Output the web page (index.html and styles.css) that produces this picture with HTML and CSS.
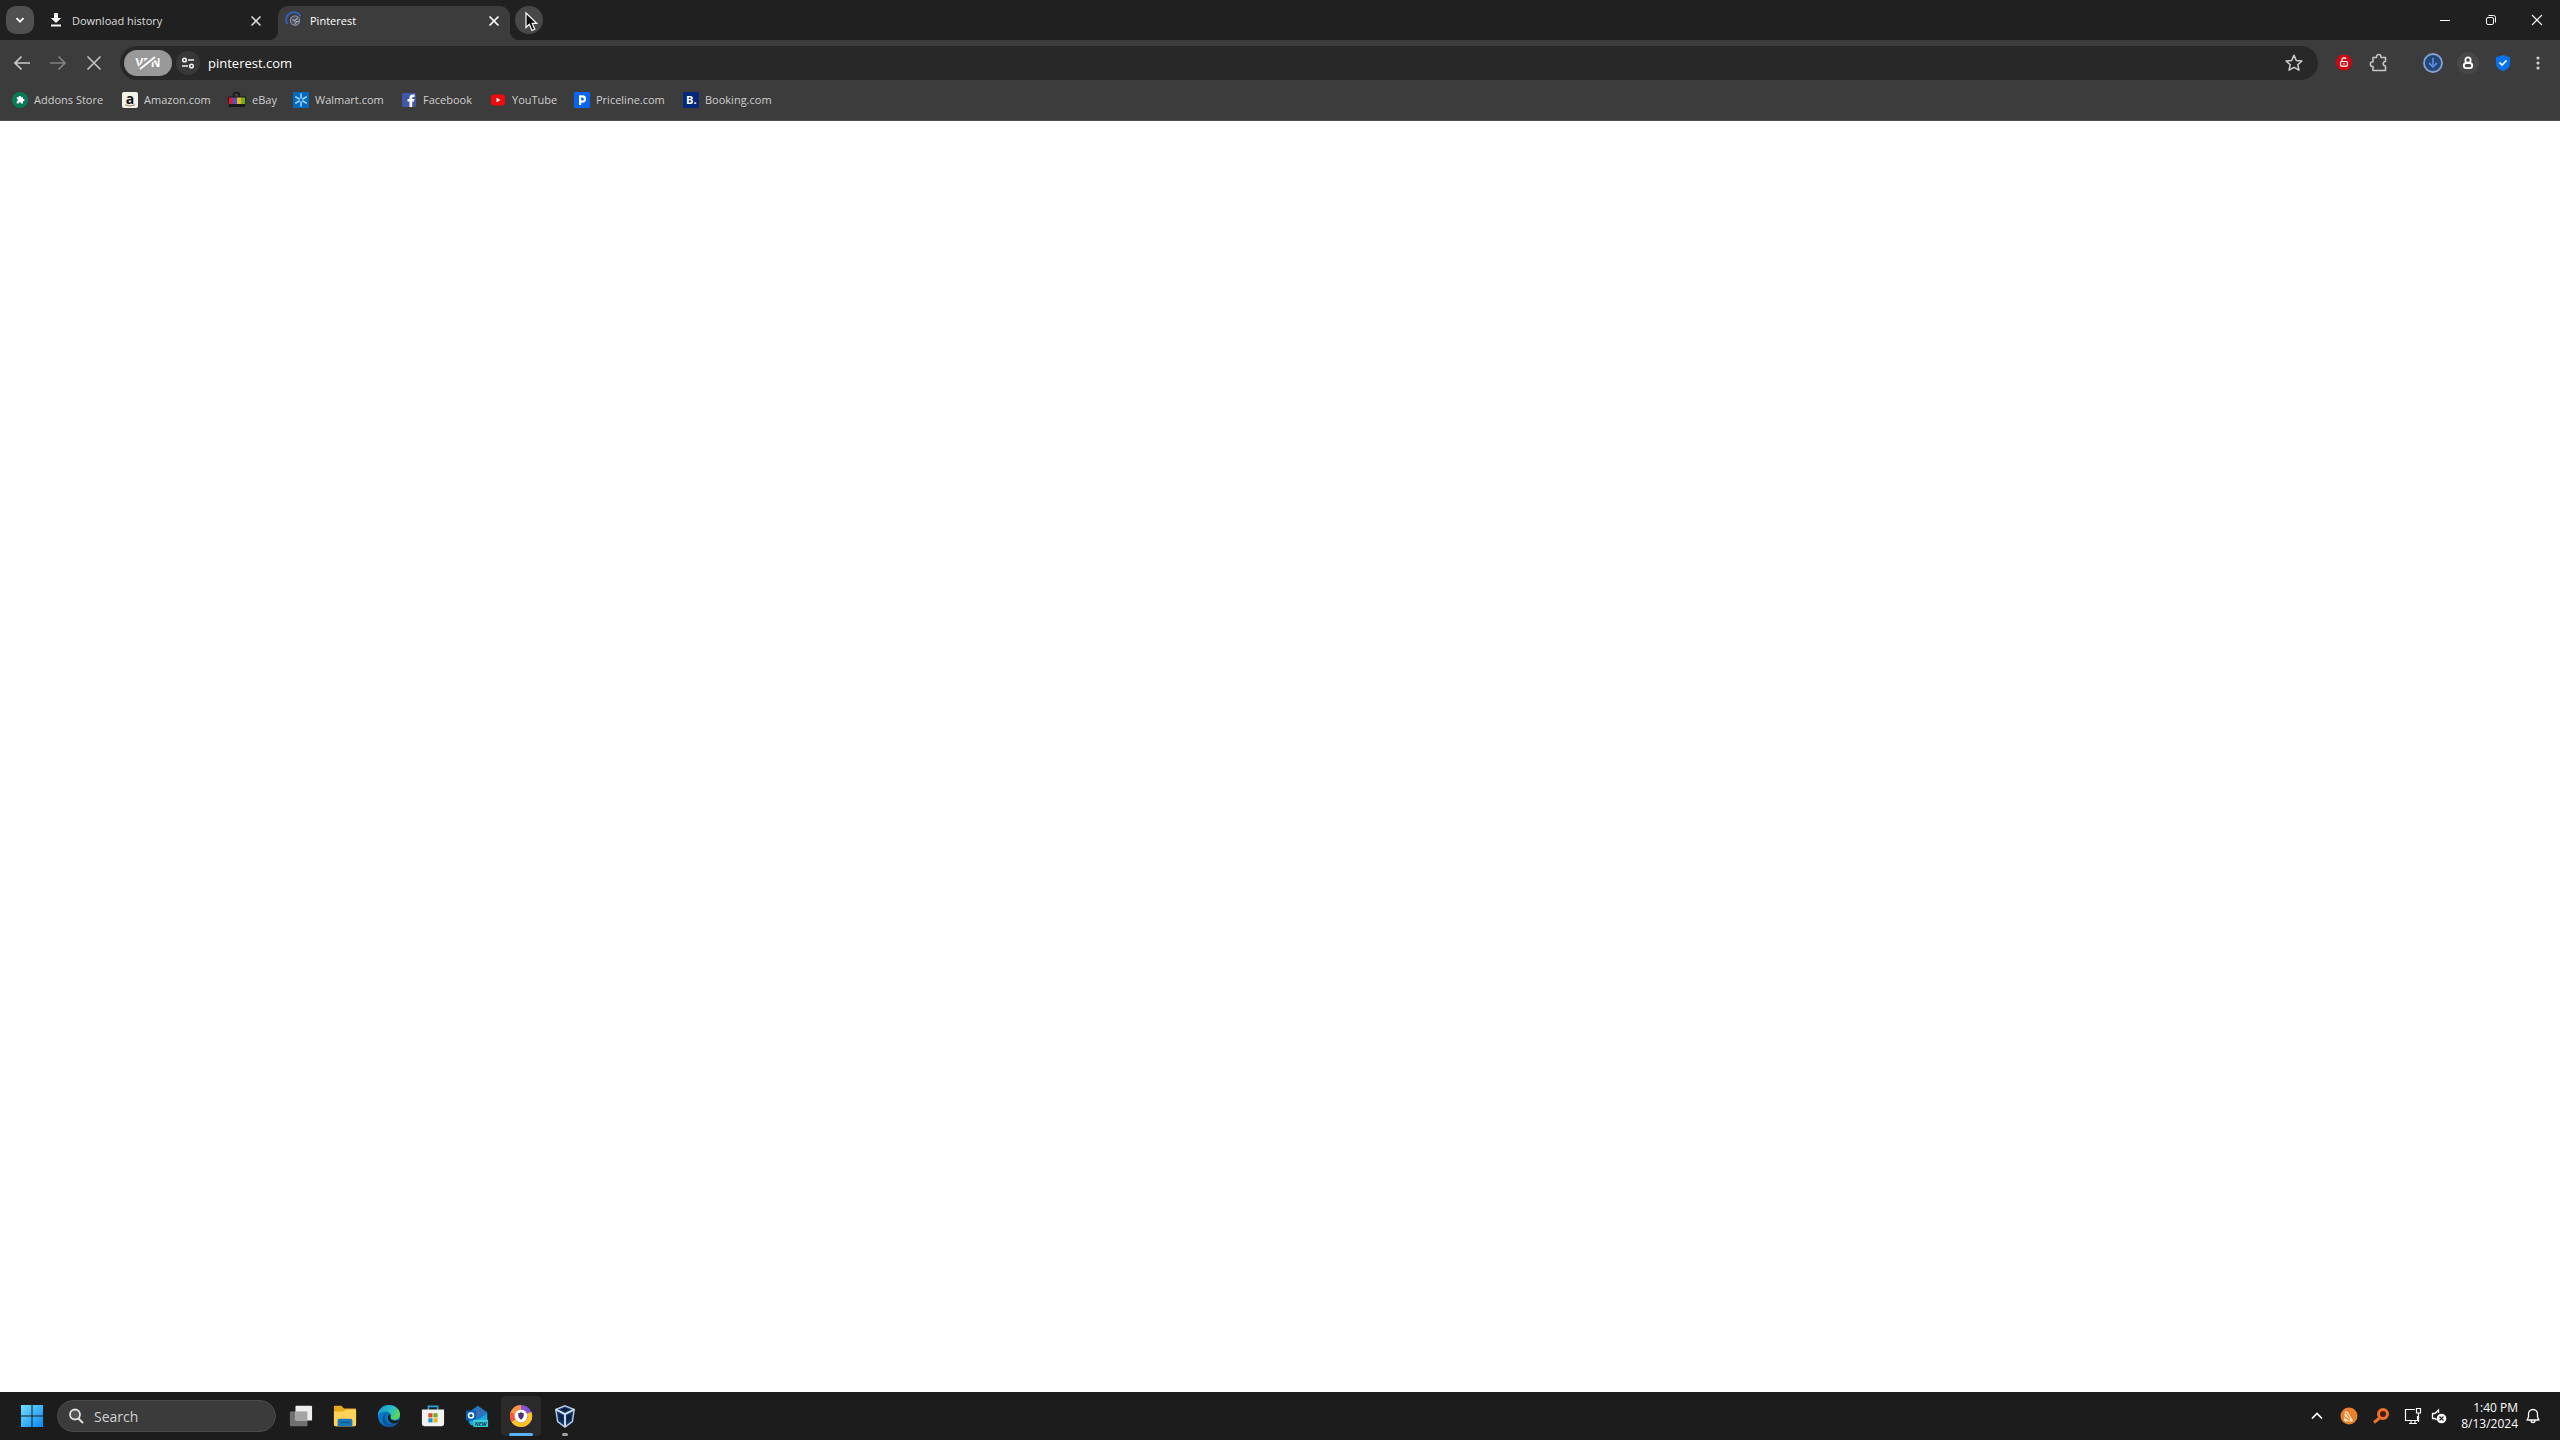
FILE: index.html
```html
<!DOCTYPE html>
<html lang="en">
<head>
<meta charset="utf-8">
<title>Pinterest</title>
<link rel="stylesheet" href="styles.css">
</head>
<body>
<div class="desktop">
  <header class="browser">
    <div class="tabstrip">
      <button class="tab-search" aria-label="Search tabs"><svg width="12" height="12" viewBox="0 0 12 12"><path d="M2.500 4.200L6 7.700l3.500-3.500" fill="none" stroke="#fff" stroke-width="1.800"/></svg></button>
      <div class="tabs">
        <div class="tab">
          <svg class="favicon" viewBox="0 0 16 16"><path d="M6 1h4v5h3.200L8 11 2.800 6H6zM3 12.500h10v2H3z" fill="#f4f4f4"/></svg>
          <span class="tab-title">Download history</span>
          <button class="tab-close" aria-label="Close tab"><svg width="10" height="10" viewBox="0 0 10 10"><path d="M.5.500l9 9M9.500.500l-9 9" stroke="#d5d5d5" stroke-width="1.600"/></svg></button>
        </div>
        <div class="tab active">
          <svg class="favicon" viewBox="0 0 16 16"><path d="M1.200 12A7 7 0 0 1 14.500 4" fill="none" stroke="#3560b4" stroke-width="2"/><circle cx="9" cy="8.500" r="4.600" fill="#4c4f57" stroke="#8790a2" stroke-width="1.200"/><path d="M6.500 7.500l2 1.500 3-3M9 12l1.500-2.500h2.500" fill="none" stroke="#a5adbc" stroke-width="1.200"/></svg>
          <span class="tab-title">Pinterest</span>
          <button class="tab-close" aria-label="Close tab"><svg width="10" height="10" viewBox="0 0 10 10"><path d="M.5.500l9 9M9.500.500l-9 9" stroke="#fff" stroke-width="1.700"/></svg></button>
        </div>
      </div>
      <button class="new-tab" aria-label="New tab"><svg class="pointer" width="13" height="20" viewBox="0 0 13 20"><path d="M1 1v14.500l3.300-3.200L7 18.500l2.800-1.200L7.200 11.400h4.600z" fill="#0c0c0c" stroke="#fff" stroke-width="1.200"/></svg></button>
      <div class="window-controls">
        <button aria-label="Minimize"><svg width="12" height="12" viewBox="0 0 12 12"><path d="M1 6.500h10" stroke="#fff"/></svg></button>
        <button aria-label="Restore"><svg width="12" height="12" viewBox="0 0 12 12"><rect x="1.500" y="3.500" width="7" height="7" rx="1.500" fill="none" stroke="#fff"/><path d="M3.500 1.500H8.500a2 2 0 0 1 2 2V8.500" fill="none" stroke="#fff"/></svg></button>
        <button aria-label="Close"><svg width="12" height="12" viewBox="0 0 12 12"><path d="M1 1l10 10M11 1L1 11" stroke="#fff" stroke-width="1.100"/></svg></button>
      </div>
    </div>
    <div class="toolbar">
      <nav class="nav">
        <button aria-label="Back"><svg width="18" height="16" viewBox="0 0 18 16"><path d="M17 8H2M8.500 1.500L2 8l6.500 6.500" fill="none" stroke="#c9c9c9" stroke-width="1.700"/></svg></button>
        <button aria-label="Forward" disabled><svg width="18" height="16" viewBox="0 0 18 16"><path d="M1 8h15M9.500 1.500L16 8l-6.500 6.500" fill="none" stroke="#808080" stroke-width="1.700"/></svg></button>
        <button aria-label="Stop"><svg width="16" height="16" viewBox="0 0 16 16"><path d="M1.500 1.500l13 13M14.500 1.500l-13 13" stroke="#c4c4c4" stroke-width="1.600"/></svg></button>
      </nav>
      <div class="omnibox">
        <button class="vpn">VPN<svg class="slash" width="20" height="14" viewBox="0 0 20 14"><path d="M3 13L17 1" stroke="#999" stroke-width="6"/><path d="M3 13L18 1" stroke="#fff" stroke-width="1.800"/></svg></button>
        <button class="site-info" aria-label="Site information"><svg width="14" height="14" viewBox="0 0 14 14"><g fill="none" stroke="#eee" stroke-width="1.600"><circle cx="3.500" cy="4" r="1.800"/><path d="M7 4h6M1 10h6"/><circle cx="10.500" cy="10" r="1.800"/></g></svg></button>
        <input class="url" type="text" value="pinterest.com" aria-label="Address">
        <button class="star" aria-label="Bookmark this page"><svg width="18" height="18" viewBox="0 0 18 18"><path d="M9 1.300l2.300 5.200 5.600.5-4.200 3.700 1.300 5.500L9 13.300l-5 2.900 1.300-5.500L1.100 7l5.600-.5z" fill="none" stroke="#d0d0d0" stroke-width="1.500" stroke-linejoin="round"/></svg></button>
      </div>
      <div class="actions">
        <button aria-label="Privacy guard"><svg width="16" height="18" viewBox="0 0 16 18"><circle cx="8" cy="8.500" r="8" fill="#cf0713"/><path d="M6 7.500V6a2.100 2.100 0 0 1 4-1" fill="none" stroke="#fff" stroke-width="1.300"/><rect x="4.600" y="7.500" width="6.800" height="4.600" rx="1" fill="none" stroke="#fff" stroke-width="1.200"/><path d="M8 9v1.500" stroke="#fff" stroke-width="1.200"/></svg></button>
        <button aria-label="Extensions"><svg width="20" height="20" viewBox="0 0 20 20"><path d="M4 4.500H7.500C6.800.500 12.700.500 12 4.500H16.500V8.500C13.500 8.500 13.500 13 16.500 13V17.500H4V13.500C.500 14 .500 8.300 4 8.800z" fill="none" stroke="#c5c5c5" stroke-width="1.600" stroke-linejoin="round"/></svg></button>
        <button class="downloads" aria-label="Downloads"><svg width="22" height="22" viewBox="0 0 22 22"><circle cx="11" cy="11" r="9" fill="#254678" stroke="#83a3d4" stroke-width="1.800"/><path d="M11 6v9M7 11l4 4 4-4" fill="none" stroke="#5288dc" stroke-width="1.800"/></svg></button>
        <button aria-label="Profile"><svg width="24" height="24" viewBox="0 0 24 24"><circle cx="12" cy="12" r="11" fill="#484848"/><circle cx="12" cy="9" r="2.700" fill="none" stroke="#fff" stroke-width="1.700"/><rect x="7.800" y="12" width="8.400" height="5.200" rx="2.600" fill="none" stroke="#fff" stroke-width="1.800"/></svg></button>
        <button aria-label="Security center"><svg width="18" height="18" viewBox="0 0 18 18"><path d="M9 1l7 2.200v6.300q0 5-7 7.800-7-2.800-7-7.800V3.200z" fill="#0872ed"/><path d="M5.500 8.500L8 11l4.500-4.500" fill="none" stroke="#fff" stroke-width="1.700"/></svg></button>
        <button aria-label="Menu"><svg width="4" height="16" viewBox="0 0 4 16"><g fill="#d0d0d0"><circle cx="2" cy="3" r="1.600"/><circle cx="2" cy="8" r="1.600"/><circle cx="2" cy="13" r="1.600"/></g></svg></button>
      </div>
    </div>
    <nav class="bookmarks">
      <a href="#"><svg viewBox="0 0 16 16"><circle cx="8" cy="8" r="8" fill="#087b59"/><path d="M4.800 5.300h2C6 3.500 9.600 3.500 9 5.300h2v1.800c2-.4 2 2.400 0 2v2.300H9c-.3-1.600-2.300-1.600-2.500 0H4.800V9.300c1.700-.3 1.700-2 0-2.300z" fill="#fff"/></svg>Addons Store</a>
      <a href="#"><svg viewBox="0 0 16 16"><rect width="16" height="16" rx="2" fill="#f5f2e8"/><text class="a-mark" x="8" y="11.500" text-anchor="middle">a</text><path d="M3 12.800q5 2.500 10 0" stroke="#8b7c54" fill="none"/></svg>Amazon.com</a>
      <a href="#"><svg class="wide" viewBox="0 0 18 16"><path d="M5.500 5V3.500a3 3 0 0 1 6 0V5" fill="none" stroke="#171717" stroke-width="1.400"/><path d="M0 4.500h18L17 15H1z" fill="#191919"/><path d="M1 5.500h4v6.500H1z" fill="#e11d2c"/><path d="M5 5.500h4v6.500H5z" fill="#3758d7"/><path d="M9 5.500h4v6.500H9z" fill="#efb315"/><path d="M13 5.500h4v6.500h-4z" fill="#73ad22"/></svg>eBay</a>
      <a href="#"><svg viewBox="0 0 16 16"><rect width="16" height="16" rx="1" fill="#0868bd"/><path d="M8 2v4M8 10v4M2.800 5l3.500 2M9.700 9l3.500 2M2.800 11l3.500-2M9.700 7l3.500-2" stroke="#92d7ff" stroke-width="1.600" stroke-linecap="round"/></svg>Walmart.com</a>
      <a href="#"><svg viewBox="0 0 16 16"><rect x="1" y="1" width="14" height="14" rx="1" fill="#4059a6"/><path d="M8.500 15V9.500h-2V7h2V5.500Q8.500 2.500 11.500 2.500H13.500V5h-1.300q-1 0-1 1v1h2.200L13 9.500h-1.800V15z" fill="#fff"/></svg>Facebook</a>
      <a href="#"><svg viewBox="0 0 16 16"><rect x="1" y="2.500" width="14" height="11" rx="3" fill="#f00b0b"/><path d="M6.500 5.700v4.600l4-2.300z" fill="#fff"/></svg>YouTube</a>
      <a href="#"><svg viewBox="0 0 16 16"><rect width="16" height="16" rx="1" fill="#0865f3"/><path d="M6.100 13V4.400h2.300a2.600 2.600 0 0 1 0 5.200H6.100" fill="none" stroke="#fff" stroke-width="2.200"/></svg>Priceline.com</a>
      <a href="#"><svg viewBox="0 0 16 16"><rect width="16" height="16" rx="2" fill="#05287c"/><text class="b-mark" x="3" y="12">B.</text></svg>Booking.com</a>
    </nav>
  </header>
  <main class="page"></main>
  <footer class="taskbar">
    <button class="start" aria-label="Start"><svg width="24" height="24" viewBox="0 0 24 24"><defs><linearGradient id="win" x2="1" y2="1"><stop stop-color="#72dfff"/><stop offset="1" stop-color="#0887f2"/></linearGradient></defs><path d="M1 1h10.500v10.500H1zM12.500 1H23v10.500H12.500zM1 12.500h10.500V23H1zM12.500 12.500H23V23H12.500z" fill="url(#win)"/></svg></button>
    <label class="search"><svg width="16" height="16" viewBox="0 0 16 16"><circle cx="7" cy="6.500" r="5" fill="#555" stroke="#e0e0e0" stroke-width="1.800"/><path d="M10.500 10.500l4 4" stroke="#e0e0e0" stroke-width="2" stroke-linecap="round"/></svg><input type="text" placeholder="Search" aria-label="Search"></label>
    <div class="apps">
      <button aria-label="Task view"><svg viewBox="0 0 26 26"><rect x="1" y="8" width="19" height="16" rx="1" fill="#707070"/><rect x="7" y="2" width="18" height="16" rx="1" fill="#eee"/><path d="M7 8h13v10H7z" fill="#a5a5a5"/></svg></button>
      <button aria-label="File Explorer"><svg viewBox="0 0 26 26"><path d="M1 3q0-1 1-1h7l3 3h12q1 0 1 1v16q0 2-2 2H3q-2 0-2-2z" fill="#e9a91e"/><path d="M1 8h10l3-2h11v16q0 2-2 2H3q-2 0-2-2z" fill="#ffd35a"/><path d="M5 24v-6q0-2 2-2h12q2 0 2 2v6z" fill="#1877bb"/><path d="M8 20h10" stroke="#0e5796" stroke-width="1.500"/></svg></button>
      <button aria-label="Edge"><svg viewBox="0 0 26 26"><defs><linearGradient id="edge" x2="1" y2=".5"><stop stop-color="#168ed9"/><stop offset=".6" stop-color="#27bfc4"/><stop offset="1" stop-color="#5bd65a"/></linearGradient></defs><circle cx="13" cy="13" r="12" fill="#0876c5"/><path d="M1 13C1 6 6 1 13 1s12 5 12 10c0 4-3 6-6 6-4 0-5-2-4-4 1-6-11-7-14 0z" fill="url(#edge)"/><path d="M12 9c-6 3-4 13 5 13 3 0 5-1 7-3-3 5-8 6-11 6-9-1-9-14-1-16z" fill="#0d549d"/><path d="M15 12c-2 5 2 8 9 5l-1 3c-7 4-14-3-10-9z" fill="#1c1c1c"/></svg></button>
      <button aria-label="Microsoft Store"><svg viewBox="0 0 26 26"><path d="M8 7V2.500h10V7" fill="none" stroke="#25a2dd" stroke-width="1.800"/><path d="M1 6h24v15q0 3-3 3H4q-3 0-3-3z" fill="#f2f2f2"/><path d="M8 10h4.500v4.500H8z" fill="#e54725"/><path d="M13.500 10H18v4.500h-4.500z" fill="#72ad22"/><path d="M8 15.500h4.500V20H8z" fill="#1394d1"/><path d="M13.500 15.500H18V20h-4.500z" fill="#efb21b"/></svg></button>
      <button aria-label="Outlook"><svg viewBox="0 0 26 26"><path d="M4 9l10-7 10 7v12H4z" fill="#127fc6"/><path d="M8 8l7-4 7 5-8 6z" fill="#3a6db5"/><path d="M4 14l10 3 10-7v13H6z" fill="#18a9dd"/><rect x="1" y="7" width="11" height="11" rx="1" fill="#075fb1"/><circle cx="6.500" cy="12.500" r="2.700" fill="none" stroke="#fff" stroke-width="1.700"/><rect x="9" y="17" width="16" height="8" rx="1" fill="#38cfd8"/><text class="new-mark" x="17" y="23.500" text-anchor="middle">NEW</text></svg></button>
      <button class="current" aria-label="Avast Secure Browser"><svg viewBox="0 0 26 26"><circle cx="13" cy="13" r="9.500" fill="none" stroke="#8752d8" stroke-width="5"/><path d="M3.500 13A9.500 9.500 0 0 1 13 3.500" fill="none" stroke="#ff9540" stroke-width="5"/><path d="M22 9.500A9.500 9.500 0 0 1 13 22.500 9.500 9.500 0 0 1 4 16" fill="none" stroke="#ffc323" stroke-width="5"/><path d="M5 18a9.500 9.500 0 0 1-1-8" fill="none" stroke="#f45a38" stroke-width="5"/><circle cx="13" cy="13" r="7" fill="#fff"/><path d="M10 10q3 0 3-1.500Q13 10 16 10q.5 5-3 7-3.500-2-3-7z" fill="#4c3279"/></svg></button>
      <button class="running" aria-label="VirtualBox"><svg viewBox="0 0 26 26"><path d="M13 2l10 4-2 13-8 6-8-6L3 6z" fill="#173a6c" stroke="#b8cde7" stroke-width="1.500"/><path d="M3 6l10 5 10-5M13 11v13" fill="none" stroke="#d5e3f2" stroke-width="2"/><path d="M8 6l5-2 5 2-5 2z" fill="#071c39"/><path d="M6 10l5 3v7l-4-3zM20 10l-5 3v7l4-3z" fill="#082346"/></svg></button>
    </div>
    <div class="tray">
      <button aria-label="Show hidden icons"><svg width="12" height="12" viewBox="0 0 12 12"><path d="M1 8.500l5-5 5 5" fill="none" stroke="#fff" stroke-width="1.700"/></svg></button>
      <button aria-label="Avast"><svg width="18" height="18" viewBox="0 0 18 18"><circle cx="9" cy="9" r="8.500" fill="#e9802b"/><path d="M5 4.500q2-1 3 1l4.500 7q1 1.500-.5 2H6q-2.500-.3-2-2.500z" fill="#ffe2bd"/><path d="M4 9.500l6 4M6 6l4 5.500" stroke="#e9802b" stroke-width="1.200"/></svg></button>
      <button aria-label="Search tool"><svg width="18" height="18" viewBox="0 0 18 18"><circle cx="11" cy="7" r="4.500" fill="#471b0c" stroke="#ec702c" stroke-width="3"/><path d="M7.500 11L2 15.500" stroke="#ec702c" stroke-width="3"/></svg></button>
      <button class="network" aria-label="Network"><svg width="18" height="18" viewBox="0 0 18 18"><path d="M11 2.500H1.500v11h12V9M5 16.500h8M7 14v2M11 14v2" fill="none" stroke="#fff" stroke-width="1.200"/><path d="M12.500 1.500h4V6h-4zM14.500 6v9" fill="none" stroke="#fff" stroke-width="1.200"/></svg></button>
      <button class="sound" aria-label="Volume muted"><svg width="16" height="16" viewBox="0 0 16 16"><path d="M5.500 12L4 10.500H1.500v-5H4L7.500 2v3" fill="none" stroke="#fff" stroke-width="1.300"/><circle cx="10.500" cy="10.500" r="4.800" fill="#fff"/><path d="M8.500 8.500l4 4M12.500 8.500l-4 4" stroke="#222" stroke-width="1.100"/></svg></button>
      <time class="clock"><span>1:40 PM</span><span>8/13/2024</span></time>
      <button class="bell" aria-label="Notifications"><svg width="14" height="16" viewBox="0 0 14 16"><path d="M1 12l1.500-3V6a4.500 4.500 0 0 1 9 0v3L13 12zM5 12.500a2 2 0 0 0 4 0" fill="none" stroke="#fff" stroke-width="1.300" stroke-linejoin="round"/></svg></button>
    </div>
  </footer>
</div>
</body>
</html>
```
FILE: styles.css
```css
* { box-sizing: border-box; }
body { margin: 0; font: 12px/16px "Open Sans", "Noto Sans", sans-serif; color: #fff; }
button { display: flex; align-items: center; justify-content: center; padding: 0; border: 0; background: none; color: inherit; font: inherit; flex: none; }
input { border: 0; padding: 0; background: none; color: inherit; font: inherit; outline: 0; min-width: 0; }
svg { display: block; flex: none; overflow: visible; }

.desktop { display: flex; flex-direction: column; min-height: 100vh; }
.browser { background: #3c3c3c; }

.tabstrip { display: flex; align-items: center; height: 40px; padding-left: 6px; background: #202020; }
.tab-search { width: 28px; height: 28px; border-radius: 10px; background: #505050; }
.tabs { display: flex; align-self: flex-end; padding-left: 6px; font-size: 11px; }
.tab { position: relative; display: flex; align-items: center; width: 238px; height: 34px; padding: 0 17px 6px 8px; color: #ddd; }
.active { width: 232px; padding: 0 11px 6px 8px; border-radius: 10px 10px 0 0; background: #3c3c3c; color: #fff; }
.active::before, .active::after { content: ""; position: absolute; bottom: 0; width: 10px; height: 10px; }
.active::before { right: 100%; background: radial-gradient(circle at 0 0, #202020 10px, #3c3c3c 11px); }
.active::after { left: 100%; background: radial-gradient(circle at 100% 0, #202020 10px, #3c3c3c 11px); }
.tab .favicon { width: 16px; height: 16px; }
.tab-title { flex: 1; padding: 2px 0 0 8px; }
.tab-close { width: 10px; height: 10px; margin-top: 2px; }
.new-tab { position: relative; width: 28px; height: 28px; margin-left: 5px; border-radius: 14px; background: #484848; }
.pointer { position: absolute; left: 10px; top: 6px; }
.window-controls { display: flex; margin-left: auto; }
.window-controls button { width: 46px; height: 40px; }

.toolbar { display: flex; align-items: center; height: 46px; padding-right: 5px; }
.nav { display: flex; padding: 0 8px 0 4px; }
.nav button { width: 36px; height: 34px; }
.omnibox { display: flex; align-items: center; flex: 1; height: 34px; padding: 0 12px 0 4px; border-radius: 17px; background: #282828; }
.vpn { position: relative; width: 48px; height: 26px; border-radius: 13px; background: #999; font-weight: 700; }
.slash { position: absolute; left: 13px; top: 6px; }
.site-info { width: 24px; height: 24px; margin-left: 4px; border-radius: 12px; background: #383838; }
.url { flex: 1; height: 24px; padding-left: 8px; font-size: 13px; }
.star { width: 24px; height: 24px; }
.actions { display: flex; margin-left: 8px; }
.actions button { width: 35px; height: 34px; }
.actions .downloads { margin-left: 19px; }

.bookmarks { display: grid; grid-template-columns: 110px 106px 65px 108px 89px 84px 109px 110px; align-items: center; height: 35px; padding: 0 12px 6px; border-bottom: 1px solid #505050; font-size: 11px; }
.bookmarks a { display: flex; align-items: center; gap: 6px; color: #d0d0d0; text-decoration: none; white-space: nowrap; }
.bookmarks svg { width: 16px; height: 16px; }
.bookmarks .wide { width: 18px; }
.a-mark { font: 700 14px "Open Sans", sans-serif; fill: #111; }
.b-mark { font: 700 11px "Open Sans", sans-serif; fill: #fff; }

.page { flex: 1; background: #fff; }

.taskbar { display: flex; align-items: center; height: 48px; padding: 0 20px; background: #1c1c1c; }
.search { display: flex; align-items: center; gap: 10px; width: 219px; height: 32px; margin-left: 13px; padding: 0 10px; border: 1px solid #484848; border-radius: 16px; background: #3b3b3b; font-size: 14px; }
.search input { flex: 1; height: 24px; }
.search input::placeholder { color: #d2d2d2; opacity: 1; }
.apps { display: flex; gap: 4px; margin-left: 5px; }
.apps button { position: relative; width: 40px; height: 40px; border-radius: 4px; }
.apps svg { width: 24px; height: 24px; }
.new-mark { font: italic 700 6px "Open Sans", sans-serif; fill: #073a58; }
.current { background: #2a2a2a; }
.current::after, .running::after { content: ""; position: absolute; bottom: 0; height: 3px; border-radius: 2px; }
.current::after { width: 24px; background: #58b4ef; }
.running::after { width: 6px; background: #a0a0a0; }
.tray { display: flex; align-items: center; margin-left: auto; }
.tray button { width: 32px; height: 32px; }
.tray .sound { width: 20px; }
.clock { display: flex; flex-direction: column; align-items: flex-end; width: 69px; }
.tray .bell { width: 14px; margin-left: 8px; }
```
